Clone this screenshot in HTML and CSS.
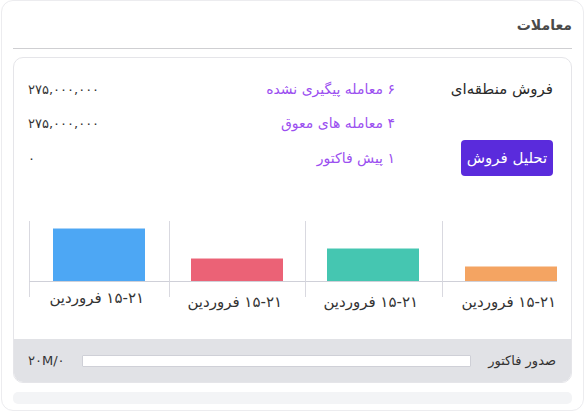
FILE: index.html
```html
<!DOCTYPE html>
<html lang="fa" dir="rtl">
<head>
<meta charset="utf-8">
<title>معاملات</title>
<link rel="stylesheet" href="styles.css">
</head>
<body>
<div class="card">
  <div class="card-head">
    <h2 class="title">معاملات</h2>
  </div>
  <div class="panel">
    <div class="panel-body">
      <div class="stats">
        <div class="region">فروش منطقه‌ای</div>
        <div class="deal">۶ معامله پیگیری نشده</div>
        <div class="amount">۲۷۵,۰۰۰,۰۰۰</div>

        <div class="empty"></div>
        <div class="deal">۴ معامله های معوق</div>
        <div class="amount">۲۷۵,۰۰۰,۰۰۰</div>

        <div class="btn-cell"><button class="btn">تحلیل فروش</button></div>
        <div class="deal">۱ پیش فاکتور</div>
        <div class="amount">۰</div>
      </div>

      <div class="chart">
        <div class="col col-1">
          <div class="plot"><div class="bar bar-blue" style="height:53px"></div></div>
          <div class="tick"></div>
          <div class="label label-high">۱۵-۲۱ فروردین</div>
        </div>
        <div class="col col-2">
          <div class="plot"><div class="bar bar-red" style="height:23px"></div></div>
          <div class="tick"></div>
          <div class="label">۱۵-۲۱ فروردین</div>
        </div>
        <div class="col col-3">
          <div class="plot"><div class="bar bar-green" style="height:33px"></div></div>
          <div class="tick"></div>
          <div class="label">۱۵-۲۱ فروردین</div>
        </div>
        <div class="col col-4">
          <div class="plot"><div class="bar bar-orange" style="height:15px"></div></div>
          <div class="tick"></div>
          <div class="label">۱۵-۲۱ فروردین</div>
        </div>
      </div>
    </div>
    <div class="panel-foot">
      <span class="foot-label">صدور فاکتور</span>
      <div class="progress"></div>
      <span class="foot-value">۲۰M/۰</span>
    </div>
  </div>
  <div class="strip"></div>
</div>
</body>
</html>
```

FILE: styles.css
```css
* { box-sizing: border-box; }

html, body {
  margin: 0;
  padding: 0;
  background: #ffffff;
}

body {
  font-family: "DejaVu Sans", "Noto Sans", sans-serif;
  color: #333333;
  width: 584px;
  height: 412px;
  overflow: hidden;
}

.card {
  width: 583px;
  height: 411px;
  border: 1px solid #ececef;
  border-radius: 12px;
  background: #ffffff;
  padding: 0 11px 7px;
}

.card-head {
  padding: 14px 0 13px;
  border-bottom: 1px solid #cfcfd2;
}

.title {
  margin: 0;
  font-size: 14px;
  line-height: 20px;
  font-weight: bold;
  color: #4a4a4a;
}

.panel {
  margin-top: 8px;
  border: 1px solid #e5e5e9;
  border-radius: 10px;
  overflow: hidden;
  background: #ffffff;
}

.panel-body {
  padding: 14px 14px 27px;
}

.stats {
  display: grid;
  grid-template-columns: 158px 1fr auto;
  grid-template-rows: 34px 34px 36px;
  align-items: center;
  margin-right: 4px;
}

.region {
  font-size: 15px;
  color: #2a2a2a;
}

.deal {
  font-size: 14px;
  color: #9b4ff0;
}

.amount {
  direction: ltr;
  font-size: 13px;
  color: #333333;
}

.btn-cell {
  display: flex;
}

.btn {
  height: 36px;
  width: 92px;
  border: 0;
  border-radius: 4px;
  background: #5a2bdc;
  color: #ffffff;
  font-family: inherit;
  font-size: 15px;
  padding: 0;
  cursor: pointer;
}

.chart {
  margin-top: 45px;
  margin-left: 1px;
  display: flex;
  direction: ltr;
}

.col {
  display: flex;
  flex-direction: column;
}

.col-1 { width: 140px; }
.col-2 { width: 136px; }
.col-3 { width: 137px; }
.col-4 { width: 115px; }

.plot {
  height: 61px;
  border-left: 1px solid #d9d9e0;
  border-bottom: 1px solid #cfd0d8;
  display: flex;
  align-items: flex-end;
}

.tick {
  height: 15px;
  border-left: 1px solid #d9d9e0;
}

.bar {
  width: 92px;
}

.col-1 .bar, .col-1 .label { margin-left: 23px; }
.col-2 .bar, .col-2 .label { margin-left: 21px; }
.col-3 .bar, .col-3 .label { margin-left: 21px; }
.col-4 .bar, .col-4 .label { margin-left: 22px; }

.bar-blue { background: #4da7f4; border-top: 1px solid #a9d3f8; }
.bar-red { background: #eb6276; border-top: 1px solid #f5b3bc; }
.bar-green { background: #45c6b1; border-top: 1px solid #a3e3d8; }
.bar-orange { background: #f4a462; border-top: 1px solid #f9d1b0; }

.label {
  width: 92px;
  margin-top: -5px;
  direction: rtl;
  text-align: center;
  white-space: nowrap;
  font-size: 15px;
  line-height: 20px;
  color: #333333;
}

.label-high {
  margin-top: -9px;
}

.panel-foot {
  height: 43px;
  background: #e1e2e6;
  display: flex;
  align-items: center;
  gap: 17px;
  padding: 0 15px 0 14px;
}

.foot-label {
  font-size: 13px;
  color: #333333;
  white-space: nowrap;
}

.progress {
  flex: 1;
  height: 12px;
  background: #ffffff;
  border: 1px solid #cfd0d7;
  border-radius: 1px;
}

.foot-value {
  direction: ltr;
  unicode-bidi: isolate;
  font-size: 13px;
  color: #333333;
  white-space: nowrap;
}

.strip {
  margin-top: 9px;
  height: 12px;
  background: #f3f4f6;
  border-radius: 5px;
}
```
